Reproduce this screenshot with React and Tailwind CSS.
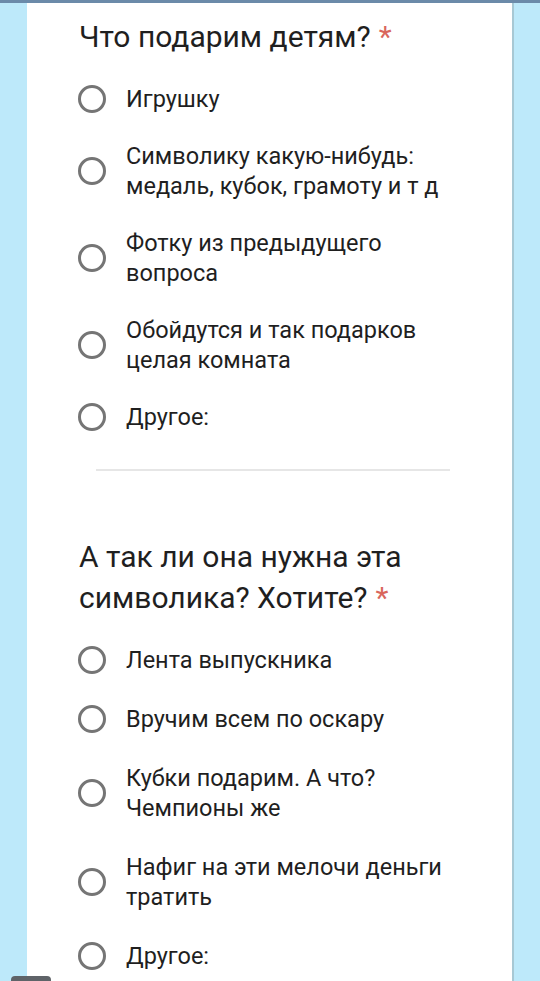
const q1 = [
  ['Игрушку'],
  ['Символику какую-нибудь:', 'медаль, кубок, грамоту и т д'],
  ['Фотку из предыдущего', 'вопроса'],
  ['Обойдутся и так подарков', 'целая комната'],
  ['Другое:'],
]

const q2 = [
  ['Лента выпускника'],
  ['Вручим всем по оскару'],
  ['Кубки подарим. А что?', 'Чемпионы же'],
  ['Нафиг на эти мелочи деньги', 'тратить'],
  ['Другое:'],
]

function Option({ lines }) {
  return (
    <div className="flex items-center">
      <div className="w-[28px] h-[28px] rounded-full border-[3px] border-[#757575] shrink-0" />
      <div className="ml-[20px] text-[23.5px] leading-[30px] text-[#1f1f1f]">
        {lines.map((l) => (
          <div key={l}>{l}</div>
        ))}
      </div>
    </div>
  )
}

function Question({ title, options, gap }) {
  return (
    <div>
      <h2 className="text-[30px] leading-[41px] text-[#1f1f1f] font-normal">
        {title.map((t, i) => (
          <div key={t}>
            {t}
            {i === title.length - 1 && <span className="text-[#d9665c] ml-[8px]">*</span>}
          </div>
        ))}
      </h2>
      <div className={`flex flex-col ${gap} mt-[27px] ml-[-1px]`}>
        {options.map((o) => (
          <Option key={o[0]} lines={o} />
        ))}
      </div>
    </div>
  )
}

export default function App() {
  return (
    <div
      className="relative w-[540px] h-[981px] overflow-hidden bg-[#bde9fa] flex flex-col"
      style={{ fontFamily: 'Roboto, "Noto Sans", sans-serif' }}
    >
      <div className="h-[3px] bg-[#6b8aa9] shrink-0" />
      <div className="ml-[27px] w-[487px] flex-1 bg-white border-r-[2px] border-[#a7c8d4] pl-[52px] pt-[13px]">
        <Question title={['Что подарим детям?']} options={q1} gap="gap-[27px]" />
        <div className="mt-[37px] ml-[17px] w-[354px] h-[2px] bg-[#e6e6e6]" />
        <div className="mt-[65px]">
          <Question
            title={['А так ли она нужна эта', 'символика? Хотите?']}
            options={q2}
            gap="gap-[29px]"
          />
        </div>
      </div>
      <div className="absolute left-[11px] top-[976px] w-[40px] h-[12px] rounded-t-[4px] bg-[#5f6368]" />
    </div>
  )
}
